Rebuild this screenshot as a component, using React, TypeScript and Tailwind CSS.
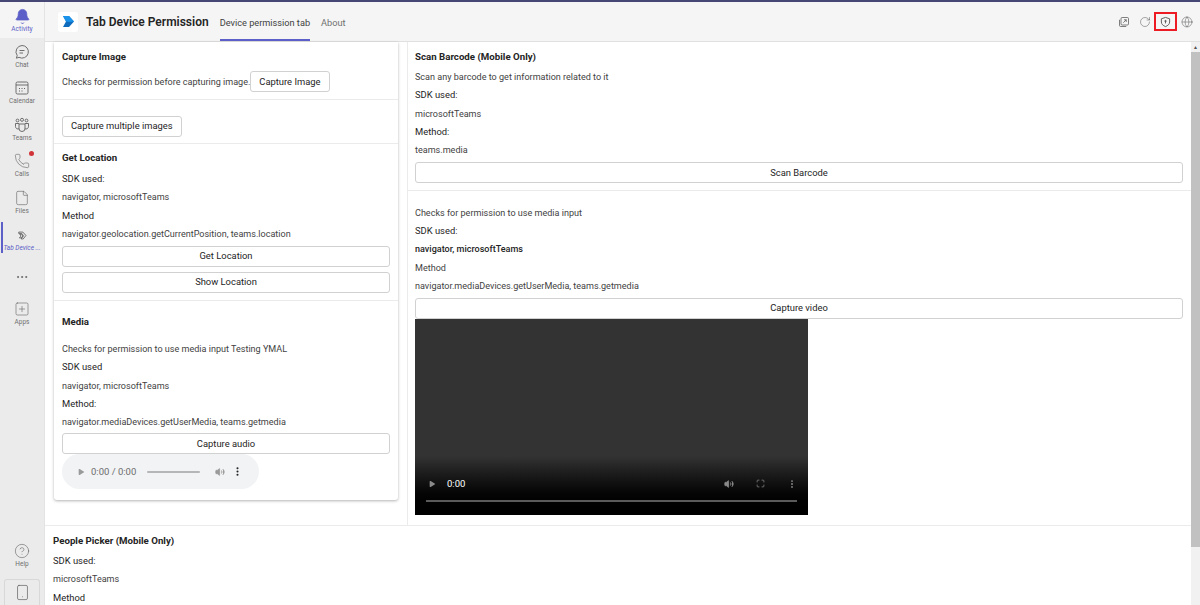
import React from 'react';
import { Bell, Phone, File, MoreHorizontal, SquarePlus, CircleHelp, Smartphone, RotateCw, Globe, Play, Volume2, Maximize, MoreVertical } from 'lucide-react';

function ChatIcon(props: any) {
  return (
    <svg viewBox="0 0 16 16" fill="none" stroke="currentColor" strokeWidth="0.8" {...props}>
      <path d="M8 1.500a6.300 6.300 0 1 1-3 11.800l-2.600.9.800-2.700A6.300 6.300 0 0 1 8 1.500z" />
      <path d="M5.500 6.500h5M5.500 9h3.500" />
    </svg>
  );
}

function CalendarIcon(props: any) {
  return (
    <svg viewBox="0 0 16 16" fill="none" stroke="currentColor" strokeWidth="0.8" {...props}>
      <rect x="2" y="2" width="12" height="12" rx="1.500" />
      <path d="M2 5h12" />
      <path d="M5 8h1v1H5zM7.500 8h1v1h-1zM10 8h1v1h-1zM5 10.500h1v1H5zM7.500 10.500h1v1h-1z" fill="currentColor" strokeWidth="0" />
    </svg>
  );
}

function TeamsIcon(props: any) {
  return (
    <svg viewBox="0 0 16 16" fill="none" stroke="currentColor" strokeWidth="0.8" {...props}>
      <circle cx="3.500" cy="3.500" r="1.400" />
      <circle cx="8" cy="2.800" r="1.500" />
      <circle cx="12.500" cy="3.500" r="1.400" />
      <path d="M5 7h6v4.500a3 3 0 0 1-6 0z" />
      <path d="M5 6.500H1.500v3a2.500 2.500 0 0 0 3.700 2.200M11 6.500h3.500v3a2.500 2.500 0 0 1-3.700 2.200" />
    </svg>
  );
}

function TabIcon(props: any) {
  return (
    <svg viewBox="0 0 16 16" fill="none" stroke="currentColor" strokeWidth="1" {...props}>
      <path d="M2.500 3h6l4.500 5-4 5H6l3.500-4.500L7 5H2.500z" />
      <path d="M4 6.500h2.500l2 2.300-2.300 2.700H3.500l2.300-2.700z" />
    </svg>
  );
}

function PopOutIcon(props: any) {
  return (
    <svg viewBox="0 0 16 16" fill="none" stroke="currentColor" strokeWidth="1" {...props}>
      <rect x="4" y="2" width="10" height="10" rx="1.500" />
      <path d="M2 5v7.500A1.500 1.500 0 0 0 3.500 14H11" />
      <path d="M7 9l4-4M8 5h3v3" />
    </svg>
  );
}

function RailItem({ icon: Icon, label, dot }: { icon: any; label: string; dot?: boolean }) {
  return (
    <div className="relative flex h-[36.5px] w-[44px] flex-col items-center justify-center">
      <Icon width={16} height={16} strokeWidth={0.9} className="text-[#616161]" />
      <span className="mt-[1px] text-[6.5px] leading-[8px] text-[#707070]">{label}</span>
      {dot && <span className="absolute right-[10px] top-[3px] h-[5px] w-[5px] rounded-full bg-[#d13438]" />}
    </div>
  );
}

function Btn({ children, wide }: { children: React.ReactNode; wide?: boolean }) {
  return (
    <button className={`flex h-[21px] items-center justify-center rounded-[3px] border border-[#d1d1d1] bg-white text-[9.4px] text-[#242424] ${wide ? 'w-full' : 'px-2'}`}>
      {children}
    </button>
  );
}

function Heading({ children }: { children: React.ReactNode }) {
  return <h3 className="text-[9.7px] font-bold leading-[18.2px] text-[#242424]">{children}</h3>;
}

function Line({ children, strong, label }: { children: React.ReactNode; strong?: boolean; label?: boolean }) {
  if (label) return <p className="text-[9.4px] leading-[18.2px] text-[#242424]">{children}</p>;
  return <p className={`text-[9.05px] leading-[18.2px] ${strong ? 'font-medium text-[#242424]' : 'text-[#424242]'}`}>{children}</p>;
}

function AudioPlayer() {
  return (
    <div className="flex h-[35px] w-[197px] items-center rounded-full bg-[#f1f3f4] pl-[15px] text-[#9a9a9a]">
      <Play size={8} fill="currentColor" strokeWidth={0} />
      <span className="ml-[6px] text-[9.5px] text-[#6d6d6d]">0:00 / 0:00</span>
      <span className="ml-[11px] h-[2px] w-[53px] rounded bg-[#b5b6b7]" />
      <Volume2 size={10} fill="currentColor" className="ml-[15px]" />
      <MoreVertical size={11} strokeWidth={2.5} className="ml-[7px] text-[#222]" />
    </div>
  );
}

function VideoPlayer() {
  return (
    <div className="flex h-[196px] w-[393px] flex-col justify-end bg-[#333333] bg-gradient-to-b from-[#333333] from-70% to-black">
      <div className="flex items-center pl-[13px] pr-[11px] text-[#8a8a8a]">
        <Play size={8} fill="currentColor" strokeWidth={0} />
        <span className="ml-[11px] text-[9.5px] text-white">0:00</span>
        <span className="flex-1" />
        <Volume2 size={10} fill="currentColor" />
        <Maximize size={9} className="ml-[22px]" />
        <MoreVertical size={10} strokeWidth={2.5} className="ml-[22px]" />
      </div>
      <div className="mx-[11px] mb-[13px] mt-[9px] h-[2px] bg-[#5a5a5a]" />
    </div>
  );
}

export default function App() {
  return (
    <div className="flex h-[605px] w-[1200px] flex-col overflow-hidden bg-[#f5f5f5] font-['Roboto','Open_Sans',sans-serif]">
      <div className="h-[2px] shrink-0 bg-[#464775]" />
      <div className="flex min-h-0 flex-1">
        {/* app rail */}
        <aside className="flex w-[45px] shrink-0 flex-col border-r border-[#e3e3e3] bg-[#ebebeb]">
          <div className="flex h-[36px] w-[44px] flex-col items-center justify-center bg-[#f5f5f5]">
            <Bell size={17} fill="#5b5fc7" strokeWidth={1} className="text-[#5b5fc7]" />
            <span className="text-[6.5px] leading-[8px] text-[#5b5fc7]">Activity</span>
          </div>
          <RailItem icon={ChatIcon} label="Chat" />
          <RailItem icon={CalendarIcon} label="Calendar" />
          <RailItem icon={TeamsIcon} label="Teams" />
          <RailItem icon={Phone} label="Calls" dot />
          <RailItem icon={File} label="Files" />
          <div className="relative flex h-[32px] w-[44px] flex-col items-center justify-end pb-[1px]">
            <span className="absolute bottom-0 left-[1px] top-[1px] w-[1.5px] bg-[#5b5fc7]" />
            <TabIcon width={11} height={11} className="mb-[3px] text-[#424242]" />
            <span className="text-[6.5px] italic leading-[8px] text-[#5b5fc7]">Tab Device ...</span>
          </div>
          <div className="flex h-[43px] items-center justify-center pt-[5px]">
            <MoreHorizontal size={14} strokeWidth={1.5} className="text-[#616161]" />
          </div>
          <RailItem icon={SquarePlus} label="Apps" />
          <div className="flex-1" />
          <RailItem icon={CircleHelp} label="Help" />
          <div className="mx-[4px] mb-0 mt-[5px] flex h-[26px] items-center justify-center rounded-t-[3px] border border-b-0 border-[#d8d8d8]">
            <Smartphone size={17} strokeWidth={1} className="text-[#616161]" />
          </div>
        </aside>

        <div className="flex min-w-0 flex-1 flex-col">
          {/* header */}
          <header className="flex h-[40px] shrink-0 items-center border-b border-[#e0e0e0] bg-[#f5f5f5] pl-[13px] pr-[7px]">
            <span className="flex h-[20px] w-[20px] items-center justify-center rounded-[3px] bg-white">
              <svg width="12" height="11" viewBox="0 0 12 11">
                <path d="M1 0h6l5 5.500L7 11H1l3-5.500z" fill="#0f6cbd" />
                <path d="M7 0l5 5.500-5 .5-3-.5L1 0z" fill="#1b93eb" />
              </svg>
            </span>
            <span className="ml-[8px] text-[12px] font-semibold text-[#242424]">Tab Device Permission</span>
            <div className="relative ml-[11px] flex h-full items-center pt-[2px] text-[9.2px] text-[#424242]">
              Device permission tab
              <span className="absolute bottom-0 left-0 right-0 h-[2px] bg-[#5b5fc7]" />
            </div>
            <span className="ml-[11px] pt-[2px] text-[9.2px] text-[#707070]">About</span>
            <div className="flex-1" />
            <PopOutIcon width={12} height={12} className="mr-[9px] text-[#555555]" />
            <RotateCw size={12} strokeWidth={1} className="mr-[3px] text-[#555555]" />
            <span className="flex h-[19px] w-[23px] items-center justify-center border-[2.5px] border-[#ed1c24]">
              <svg width="11" height="12" viewBox="0 0 24 24" fill="none" stroke="#555555" strokeWidth="2"><path d="M12 2l9 3v7c0 5-4 8-9 10-5-2-9-5-9-10V5z" /><circle cx="12" cy="10" r="1.500" fill="#555555" /><path d="M12 11v4" /></svg>
            </span>
            <Globe size={12} strokeWidth={1} className="ml-[4px] text-[#555555]" />
          </header>

          <main className="flex min-h-0 flex-1 bg-white">
            <div className="min-w-0 flex-1">
              <div className="flex h-[484px] border-b border-[#ebebeb]">
                {/* left column */}
                <div className="w-[363px] shrink-0 border-r border-[#ebebeb] pl-[9px] pr-[9px]">
                  <div className="rounded-b-[3px] bg-white shadow-[0_1px_3px_rgba(0,0,0,0.3)]">
                    <section className="h-[58px] border-b border-[#ebebeb] px-[8px] pt-[6px]">
                      <Heading>Capture Image</Heading>
                      <div className="mt-[5px] flex items-center">
                        <Line>Checks for permission before capturing image.</Line>
                        <Btn>Capture Image</Btn>
                      </div>
                    </section>
                    <section className="flex h-[44px] items-center border-b border-[#ebebeb] px-[8px] pt-[10px]">
                      <Btn>Capture multiple images</Btn>
                    </section>
                    <section className="h-[157px] border-b border-[#ebebeb] px-[8px] pt-[5px]">
                      <Heading>Get Location</Heading>
                      <div className="h-[3px]" />
                      <Line label>SDK used:</Line>
                      <Line>navigator, microsoftTeams</Line>
                      <Line label>Method</Line>
                      <Line>navigator.geolocation.getCurrentPosition, teams.location</Line>
                      <div className="mt-[3px] flex flex-col gap-[5px]">
                        <Btn wide>Get Location</Btn>
                        <Btn wide>Show Location</Btn>
                      </div>
                    </section>
                    <section className="h-[199px] px-[8px] pt-[12px]">
                      <Heading>Media</Heading>
                      <div className="h-[9px]" />
                      <Line>Checks for permission to use media input Testing YMAL</Line>
                      <Line label>SDK used</Line>
                      <Line>navigator, microsoftTeams</Line>
                      <Line label>Method:</Line>
                      <Line>navigator.mediaDevices.getUserMedia, teams.getmedia</Line>
                      <div className="mt-[2px]"><Btn wide>Capture audio</Btn></div>
                      <AudioPlayer />
                    </section>
                  </div>
                </div>
                {/* right column */}
                <div className="min-w-0 flex-1">
                  <section className="h-[149px] border-b border-[#ebebeb] pl-[7px] pr-[8px] pt-[6px]">
                    <Heading>Scan Barcode (Mobile Only)</Heading>
                    <div className="h-[2px]" />
                    <Line>Scan any barcode to get information related to it</Line>
                    <Line label>SDK used:</Line>
                    <Line>microsoftTeams</Line>
                    <Line label>Method:</Line>
                    <Line>teams.media</Line>
                    <div className="mt-[3px]"><Btn wide>Scan Barcode</Btn></div>
                  </section>
                  <section className="pl-[7px] pr-[8px] pt-[13px]">
                    <Line>Checks for permission to use media input</Line>
                    <Line label>SDK used:</Line>
                    <Line strong>navigator, microsoftTeams</Line>
                    <Line>Method</Line>
                    <Line>navigator.mediaDevices.getUserMedia, teams.getmedia</Line>
                    <div className="mt-[3px]"><Btn wide>Capture video</Btn></div>
                    <VideoPlayer />
                  </section>
                </div>
              </div>
              <section className="px-[8px] pt-[6px]">
                <Heading>People Picker (Mobile Only)</Heading>
                <div className="h-[2px]" />
                <Line label>SDK used:</Line>
                <Line>microsoftTeams</Line>
                <Line label>Method</Line>
              </section>
            </div>
            {/* scrollbar */}
            <div className="flex w-[9px] shrink-0 flex-col bg-[#f1f1f1]">
              <div className="flex h-[10px] items-center justify-center text-[5px] leading-none text-[#505050]">▲</div>
              <div className="h-[495px] bg-[#c1c1c1]" />
            </div>
          </main>
        </div>
      </div>
    </div>
  );
}
